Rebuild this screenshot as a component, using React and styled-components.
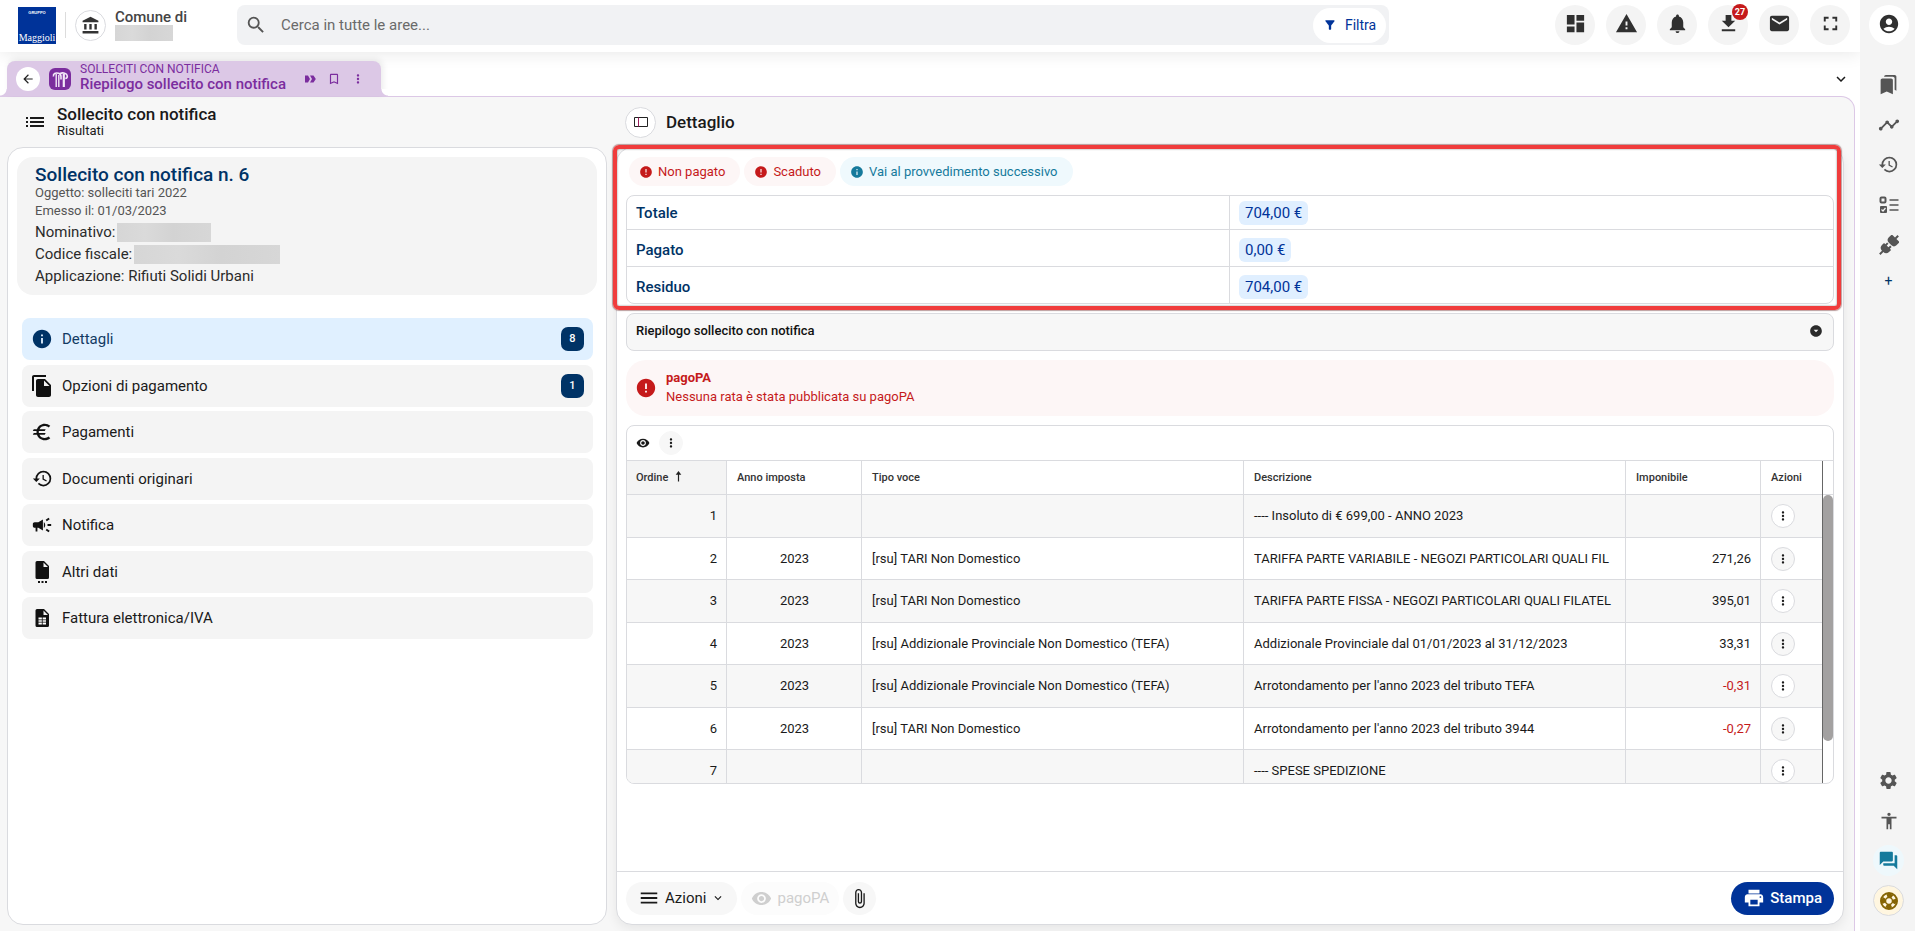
import React from "react";
import styled, { createGlobalStyle, css } from "styled-components";
import {
  MdAccessibility, MdAccountBalance, MdAccountCircle, MdArrowBack, MdAttachFile,
  MdBookmarkBorder, MdBookmarks, MdCampaign, MdDashboard, MdError, MdEuro, MdExpandMore,
  MdFileCopy, MdFileDownload, MdFilterAlt, MdForum, MdFullscreen, MdHistory, MdInfo, MdList,
  MdMail, MdMenu, MdMoreVert, MdNotifications, MdPrint, MdSearch, MdSettings, MdTimeline,
  MdVisibility, MdWarning, MdArrowDropDownCircle,
} from "react-icons/md";

const c = {
  navy: "#003366",
  blue: "#003399",
  purple: "#7b2d9e",
  lilac: "#dcc8e6",
  line: "#dadbdf",
  soft: "#f4f4f4",
  panel: "#f7f7f7",
  text: "#1a1a1a",
  red: "#c51a1b",
};

const Global = createGlobalStyle`
  *, *::before, *::after { box-sizing: border-box; }
  body { margin: 0; background: #fff; color: ${c.text}; font: 400 14px/20px Roboto, "Liberation Sans", sans-serif; }
  button, input { font: inherit; color: inherit; }
  button { border: 0; padding: 0; background: none; cursor: pointer; }
  h1, h2, p { margin: 0; }
  svg { display: block; flex: none; }
`;

const Shell = styled.div`
  display: grid;
  grid-template-columns: minmax(0, 1fr) 55px;
  min-height: 100vh;
`;
const Main = styled.div`
  display: flex;
  flex-direction: column;
`;

/* Header */
const Header = styled.header`
  display: flex;
  align-items: center;
  height: 52px;
  padding: 0 10px 2px 18px;
  background: #fff;
  box-shadow: 0 2px 16px rgba(0, 0, 0, 0.09);
`;
const Institution = styled.div`
  display: flex;
  align-items: center;
  gap: 9px;
  width: 219px;
`;
const Divider = styled.span`
  width: 1px;
  height: 26px;
  background: #dcdcdc;
`;
const InstitutionName = styled.div`
  font-size: 15px;
  font-weight: 500;
  line-height: 16px;
  color: #444;
`;
const Redacted = styled.span`
  display: block;
  width: ${(p) => p.$w}px;
  height: ${(p) => p.$h}px;
  background: linear-gradient(90deg, #d6d6d6, #dadada 30%, #d3d3d3 60%, #d7d7d7);
`;
const OutlineCircle = styled.button`
  display: grid;
  place-items: center;
  width: 31px;
  height: 31px;
  flex: none;
  border: 1px solid ${c.line};
  border-radius: 50%;
  background: #fff;
  color: #333;
`;
const Search = styled.form`
  display: flex;
  align-items: center;
  min-width: 0;
  flex: 0 1 1152px;
  height: 40px;
  padding: 0 3px 0 8px;
  border-radius: 8px;
  background: #f1f2f4;
  color: #555;
`;
const SearchInput = styled.input`
  flex: 1;
  min-width: 0;
  margin-left: 12px;
  border: 0;
  outline: 0;
  background: none;
  font-size: 15px;
  &::placeholder { color: #6a6a6a; opacity: 1; }
`;
const FilterButton = styled.button`
  display: flex;
  align-items: center;
  justify-content: center;
  gap: 8px;
  width: 73px;
  height: 35px;
  border-radius: 18px;
  background: #fff;
  color: ${c.blue};
`;
const HeaderActions = styled.nav`
  display: flex;
  gap: 11px;
  margin-left: auto;
`;
const RoundButton = styled.button`
  position: relative;
  display: grid;
  place-items: center;
  width: 40px;
  height: 40px;
  padding-bottom: 3px;
  border-radius: 50%;
  background: ${(p) => p.$bg || c.soft};
  color: #303030;
`;
const Count = styled.span`
  position: absolute;
  top: -1px;
  right: 0;
  width: 16px;
  height: 16px;
  border-radius: 50%;
  background: ${c.red};
  color: #fff;
  font-size: 9px;
  font-weight: 700;
  line-height: 16px;
  text-align: center;
`;

/* Tabs */
const TabBar = styled.div`
  display: flex;
  align-items: flex-end;
  justify-content: space-between;
  height: 44px;
  padding: 0 4px 0 7px;
`;
const Tab = styled.div`
  position: relative;
  display: flex;
  align-items: center;
  width: 374px;
  height: 35px;
  padding: 0 15px 0 9px;
  border-radius: 8px 8px 0 0;
  background: ${c.lilac};
  color: ${c.purple};
  box-shadow: 2px -2px 6px rgba(0, 0, 0, 0.08);
  &::before, &::after {
    content: "";
    position: absolute;
    bottom: 0;
    width: 7px;
    height: 7px;
  }
  &::before { right: 100%; background: radial-gradient(circle at 0 0, #fff 6px, ${c.lilac} 7px); }
  &::after { left: 100%; background: radial-gradient(circle at 100% 0, #fff 6px, ${c.lilac} 7px); }
`;
const BackButton = styled.button`
  display: grid;
  place-items: center;
  width: 24px;
  height: 24px;
  border-radius: 50%;
  background: #fff;
  color: #222;
`;
const TabLogo = styled.span`
  margin-left: 9px;
`;
const TabTitles = styled.div`
  flex: 1;
  margin-left: 9px;
  padding-bottom: 3px;
  white-space: nowrap;
`;
const TabOver = styled.div`
  font-size: 12px;
  line-height: 14px;
`;
const TabTitle = styled.div`
  font-size: 15px;
  font-weight: 500;
  line-height: 16px;
`;
const TabTools = styled.div`
  display: flex;
  gap: 8px;
`;
const ToolButton = styled.button`
  display: grid;
  place-items: center;
  width: 16px;
  height: 16px;
`;
const TabMenu = styled.button`
  display: grid;
  place-items: center;
  width: 30px;
  height: 35px;
`;

/* Work area */
const Workspace = styled.main`
  display: grid;
  grid-template-columns: minmax(0, 600fr) minmax(0, 1228fr);
  gap: 9px;
  flex: 1;
  margin-right: 5px;
  padding: 0 10px 6px 7px;
  border: solid ${c.lilac};
  border-width: 1px 1px 0 0;
  border-radius: 0 14px 0 0;
  background: ${c.panel};
`;
const Column = styled.section`
  position: relative;
  display: flex;
  flex-direction: column;
  min-width: 0;
`;
const ColumnHead = styled.div`
  display: flex;
  align-items: center;
  gap: 10px;
  height: 50px;
  padding-left: ${(p) => p.$indent}px;
`;
const Heading = styled.h1`
  font-size: 17px;
  font-weight: 500;
  line-height: 18px;
`;
const SubHeading = styled.p`
  font-size: 13px;
  line-height: 16px;
`;
const Card = styled.div`
  display: flex;
  flex-direction: column;
  flex: 1;
  padding: 9px 9px 0;
  border: 1px solid ${c.line};
  border-radius: 16px;
  background: #fff;
  ${(p) => p.$raised && css`box-shadow: 0 4px 12px rgba(0, 0, 0, 0.07);`}
`;

/* Record summary */
const Record = styled.div`
  height: 138px;
  padding: 7px 18px;
  border-radius: 16px;
  background: ${c.soft};
`;
const RecordTitle = styled.h2`
  font-size: 19px;
  font-weight: 500;
  line-height: 21px;
  color: ${c.navy};
`;
const RecordNote = styled.p`
  font-size: 13px;
  line-height: 20px;
  color: #555;
  &:first-of-type { line-height: 16px; }
`;
const RecordLine = styled.p`
  display: flex;
  align-items: center;
  gap: 2px;
  height: 22px;
  font-size: 15px;
  color: #2b2b2b;
`;

/* Section menu */
const Menu = styled.nav`
  display: flex;
  flex-direction: column;
  justify-content: space-between;
  height: 321px;
  margin: 23px 4px 0 5px;
`;
const MenuItem = styled.a`
  display: flex;
  align-items: center;
  gap: 8px;
  height: 42px;
  padding: 0 9px 0 8px;
  border-radius: 8px;
  background: ${(p) => (p.$active ? "#e0f0ff" : c.soft)};
  color: ${(p) => (p.$active ? "#123a63" : c.text)};
  font-size: 15px;
  text-decoration: none;
`;
const MenuIcon = styled.span`
  display: grid;
  place-items: center;
  width: 24px;
  color: ${(p) => (p.$active ? c.navy : "#111")};
`;
const MenuBadge = styled.span`
  width: 23px;
  height: 24px;
  margin-left: auto;
  border-radius: 7px;
  background: ${c.navy};
  color: #fff;
  font-size: 11px;
  font-weight: 500;
  line-height: 24px;
  text-align: center;
`;

/* Detail */
const Chips = styled.div`
  display: flex;
  gap: 4px;
  padding-left: 3px;
`;
const Chip = styled.span`
  display: flex;
  align-items: center;
  gap: 5px;
  height: 29px;
  padding: 0 15px 0 10px;
  border-radius: 15px;
  background: ${(p) => (p.$info ? "#eff9fd" : "#fdf6f6")};
  color: ${(p) => (p.$info ? "#157a9c" : c.red)};
  font-size: 13px;
  text-decoration: none;
`;
const Totals = styled.table`
  width: 100%;
  margin-top: 9px;
  border: 1px solid ${c.line};
  border-radius: 8px;
  border-spacing: 0;
  table-layout: fixed;
  font-size: 15px;
  th, td { height: 37px; padding: 3px 9px 0; text-align: left; }
  th { font-weight: 500; color: ${c.navy}; border-right: 1px solid ${c.line}; }
  tr:first-child > * { height: 33px; padding-top: 0; }
  tr + tr > * { border-top: 1px solid ${c.line}; }
`;
const Amount = styled.span`
  display: inline-block;
  height: 24px;
  padding: 0 6px;
  border-radius: 6px;
  background: #e0efff;
  color: ${c.blue};
  line-height: 24px;
  vertical-align: middle;
`;
const Accordion = styled.button`
  display: flex;
  align-items: center;
  justify-content: space-between;
  height: 38px;
  margin-top: 9px;
  padding: 0 10px 2px 9px;
  border: 1px solid ${c.line};
  border-radius: 8px;
  background: ${c.panel};
  font-size: 13px;
  font-weight: 500;
  color: #111;
  svg { color: #2b2b2b; }
`;
const Alert = styled.div`
  display: flex;
  align-items: center;
  gap: 9px;
  height: 56px;
  margin-top: 9px;
  padding-left: 9px;
  border-radius: 20px;
  background: #fdf6f6;
  color: ${c.red};
  font-size: 13px;
  line-height: 19px;
  strong { display: block; font-weight: 700; }
`;
const AlertText = styled.div`
  padding-bottom: 2px;
`;
const Grid = styled.div`
  height: 359px;
  margin-top: 9px;
  border: 1px solid ${c.line};
  border-radius: 8px;
  overflow: hidden;
`;
const GridTools = styled.div`
  display: flex;
  align-items: center;
  gap: 8px;
  height: 35px;
  padding-left: 8px;
  border-bottom: 1px solid ${c.line};
`;
const DotsButton = styled.button`
  display: grid;
  place-items: center;
  width: 24px;
  height: 24px;
  border: 1px solid ${(p) => (p.$plain ? c.panel : c.line)};
  border-radius: 50%;
  background: ${c.panel};
`;
const GridBody = styled.div`
  display: grid;
  grid-template-columns: minmax(0, 1fr) 10px;
  height: 322px;
`;
const GridView = styled.div`
  overflow: hidden;
  border-right: 1px solid #666;
`;
const DataTable = styled.table`
  width: 100%;
  table-layout: fixed;
  border-spacing: 0;
  font-size: 13px;
  th, td {
    padding: 0 9px 0 10px;
    border: solid ${c.line};
    border-width: 0 1px 1px 0;
    white-space: nowrap;
  }
  th:first-child, td:first-child { padding-left: 9px; }
  th:last-child, td:last-child { border-right: 0; }
  th { height: 34px; font-size: 11px; font-weight: 500; text-align: left; color: #333; }
  th:first-child { background: ${c.soft}; }
  th svg { display: inline-block; margin-left: 4px; vertical-align: -1px; }
  td { height: 42px; }
  tbody tr:nth-child(odd) td { height: 43px; background: ${c.panel}; }
  tbody tr:nth-child(odd) ${DotsButton} { background: #fff; }
`;
const Cell = styled.td`
  text-align: ${(p) => p.$align || "left"};
  color: ${(p) => (p.$negative ? c.red : c.text)};
`;
const ScrollTrack = styled.div`
  padding-top: 34px;
  background: linear-gradient(${c.line}, ${c.line}) 0 33px / 100% 1px no-repeat;
`;
const ScrollThumb = styled.div`
  height: 246px;
  border-radius: 5px;
  background: #a3a1a1;
`;
const Footer = styled.footer`
  display: flex;
  align-items: center;
  gap: 4px;
  height: 53px;
  margin: auto -9px 0;
  padding: 0 9px;
  border-top: 1px solid ${c.line};
`;
const PillButton = styled.button`
  display: flex;
  align-items: center;
  justify-content: center;
  gap: 5px;
  height: 33px;
  padding: 0 12px;
  border-radius: 17px;
  background: ${c.panel};
  font-size: 15px;
  ${(p) => p.$primary && css`
    margin-left: auto;
    background: ${c.blue};
    color: #fff;
    font-weight: 500;
  `}
  &:disabled { padding: 0 10px; background: #fcfcfc; color: #cfcfcf; }
`;
const RoundPill = styled(PillButton)`
  width: 33px;
  padding: 0;
`;

const Highlight = styled.div`
  position: absolute;
  top: 48px;
  left: -3px;
  right: 3px;
  height: 165px;
  border: 4px solid #f03c3c;
  border-radius: 6px;
  box-shadow: 0 0 1px 1px rgba(120, 60, 60, 0.5), inset 0 0 2px rgba(0, 0, 0, 0.5);
  pointer-events: none;
`;

/* Right rail */
const Rail = styled.aside`
  display: flex;
  flex-direction: column;
  align-items: center;
  padding: 5px 0 15px 2px;
  background: ${c.soft};
`;
const RailGroup = styled.div`
  display: flex;
  flex-direction: column;
  gap: 9px;
  margin-top: ${(p) => p.$top};
`;
const RailButton = styled.button`
  display: grid;
  place-items: center;
  width: 31px;
  height: ${(p) => (p.$short ? 24 : 31)}px;
  border: 1px solid ${(p) => p.$border || "transparent"};
  border-radius: 50%;
  background: ${(p) => p.$bg || "transparent"};
  color: ${(p) => p.$color || "#555"};
`;

const Logo = () => (
  <svg width="38" height="37" viewBox="0 0 38 37" role="img" aria-label="Gruppo Maggioli">
    <rect width="38" height="37" fill={c.blue} />
    <text x="19" y="7" fill="#fff" fontFamily="Liberation Sans, sans-serif" fontSize="4" fontWeight="700" textAnchor="middle">GRUPPO</text>
    <text x="19" y="34" fill="#fff" fontFamily="Liberation Serif, serif" fontSize="10" textAnchor="middle">Maggioli</text>
  </svg>
);
const TributiIcon = () => (
  <svg width="22" height="22" viewBox="0 0 22 22">
    <rect width="22" height="22" rx="6" fill={c.purple} />
    <g fill="none" stroke="#f3e8f8">
      <path d="M4.500 8.500c-.6-3 2-4 5-3.200 2 .6 2.500 1.500 2.500 3.200v3" strokeWidth="1.600" />
      <path d="M7.200 6v13M9.800 7v12" strokeWidth="1.400" />
      <path d="M11 5.500c3-1.200 7-.5 7.300 2.500.1 1.500-.8 2.300-2 2.500" strokeWidth="1.600" />
      <path d="M14.800 6v13" strokeWidth="2.200" />
    </g>
  </svg>
);
const FastIcon = () => (
  <svg width="12" height="10" viewBox="0 0 12 10" fill="currentColor">
    <path d="M1 1.500h3l2 3.500-2 3.500H1zM6 1.500h3.500L11.800 5 9.500 8.500H6L8 5z" />
  </svg>
);
const SortIcon = () => (
  <svg width="7" height="11" viewBox="0 0 7 11">
    <path d="M3.500 2v8.500" stroke="#222" strokeWidth="1.200" />
    <path d="M3.500 0L6.300 3.800H.7z" fill="#222" />
  </svg>
);
const PaneIcon = () => (
  <svg width="14" height="12" viewBox="0 0 14 12" fill="none" stroke="#222">
    <path d="M.5 1.500h13v9H.5z" />
    <path d="M4.500 1.500v9" stroke="#9b1c5a" />
  </svg>
);
const DataFileIcon = () => (
  <svg width="19" height="22" viewBox="0 0 19 22" fill="currentColor">
    <path d="M4 0h7l5 5v11.500a1.500 1.500 0 0 1-1.500 1.500h-10.500A1.500 1.500 0 0 1 2.500 16.500v-15A1.500 1.500 0 0 1 4 0zm6.500 1.500V6H15zM5 20h2v2H5zM8.500 20h2v2h-2zM12 20h2v2h-2z" fillRule="evenodd" />
  </svg>
);
const InvoiceIcon = () => (
  <svg width="19" height="20" viewBox="0 0 19 20">
    <path d="M4 1h7l5 5v11.500a1.500 1.500 0 0 1-1.500 1.500h-10.500A1.500 1.500 0 0 1 2.500 17.500v-15A1.500 1.500 0 0 1 4 1zm6.500 1.500V7H15z" fill="currentColor" fillRule="evenodd" />
    <path d="M5.500 9.500h7.500v7H5.500z" fill="#fff" />
    <path d="M5 11.800h8M5 14.200h8M9.300 9v8" stroke="#111" strokeWidth=".8" />
  </svg>
);
const ChecklistIcon = () => (
  <svg width="20" height="18" viewBox="0 0 20 18" fill="none" stroke="currentColor" strokeWidth="2">
    <rect x="1.500" y="1.500" width="5" height="5" rx="1" />
    <rect x="1" y="10" width="7" height="7" rx="1" fill="currentColor" stroke="none" />
    <path d="M2.500 13.500l1.500 1.500 2.500-3" stroke="#f4f4f4" strokeWidth="1.200" />
    <path d="M10.500 4h9M10.500 9h9M10.500 14h9" strokeWidth="1.600" />
  </svg>
);
const PlugsIcon = () => (
  <svg width="20" height="20" viewBox="0 0 20 20">
    <g transform="rotate(45 10 10)" fill="currentColor">
      <path d="M9-3h2v3.500h4.500V5c0 2-1.300 3.500-3.500 3.500H8C5.800 8.500 4.500 7 4.500 5V.5H9z" />
      <path d="M5 12h1.800V9.500h2V12h2.400V9.500h2V12H15v3c0 2.500-1.600 4-4 4v4H9v-4c-2.400 0-4-1.500-4-4z" />
    </g>
  </svg>
);
const LifebuoyIcon = () => (
  <svg width="20" height="20" viewBox="0 0 20 20" fill="none" stroke="currentColor">
    <circle cx="10" cy="10" r="8" strokeWidth="2" />
    <circle cx="10" cy="10" r="5.500" strokeWidth="3.500" strokeDasharray="5.500 3.140" strokeDashoffset="2.750" />
    <circle cx="10" cy="10" r="3.500" strokeWidth="1.500" />
  </svg>
);

const headerActions = [
  ["Cruscotto", MdDashboard],
  ["Avvisi", MdWarning],
  ["Notifiche", MdNotifications],
  ["Download", MdFileDownload, 27],
  ["Posta", MdMail],
  ["Schermo intero", MdFullscreen],
];
const menu = [
  ["Dettagli", <MdInfo size={22} />, 8],
  ["Opzioni di pagamento", <MdFileCopy size={24} />, 1],
  ["Pagamenti", <MdEuro size={22} />],
  ["Documenti originari", <MdHistory size={21} />],
  ["Notifica", <MdCampaign size={22} />],
  ["Altri dati", <DataFileIcon />],
  ["Fattura elettronica/IVA", <InvoiceIcon />],
];
const totals = [
  ["Totale", "704,00 €"],
  ["Pagato", "0,00 €"],
  ["Residuo", "704,00 €"],
];
const rows = [
  [1, "", "", "---- Insoluto di € 699,00 - ANNO 2023", ""],
  [2, "2023", "[rsu] TARI Non Domestico", "TARIFFA PARTE VARIABILE - NEGOZI PARTICOLARI QUALI FIL", "271,26"],
  [3, "2023", "[rsu] TARI Non Domestico", "TARIFFA PARTE FISSA - NEGOZI PARTICOLARI QUALI FILATEL", "395,01"],
  [4, "2023", "[rsu] Addizionale Provinciale Non Domestico (TEFA)", "Addizionale Provinciale dal 01/01/2023 al 31/12/2023", "33,31"],
  [5, "2023", "[rsu] Addizionale Provinciale Non Domestico (TEFA)", "Arrotondamento per l'anno 2023 del tributo TEFA", "-0,31"],
  [6, "2023", "[rsu] TARI Non Domestico", "Arrotondamento per l'anno 2023 del tributo 3944", "-0,27"],
  [7, "", "", "---- SPESE SPEDIZIONE", ""],
];

function TopBar() {
  return (
    <Header>
      <Institution>
        <Logo />
        <Divider />
        <OutlineCircle aria-label="Ente"><MdAccountBalance size={19} /></OutlineCircle>
        <InstitutionName>
          <div>Comune di</div>
          <Redacted $w={58} $h={16} />
        </InstitutionName>
      </Institution>
      <Search onSubmit={(e) => e.preventDefault()}>
        <MdSearch size={22} />
        <SearchInput aria-label="Cerca" placeholder="Cerca in tutte le aree..." />
        <FilterButton type="button"><MdFilterAlt size={14} />Filtra</FilterButton>
      </Search>
      <HeaderActions>
        {headerActions.map(([label, Icon, count]) => (
          <RoundButton key={label} aria-label={label}>
            <Icon size={23} />
            {count && <Count>{count}</Count>}
          </RoundButton>
        ))}
      </HeaderActions>
    </Header>
  );
}

function RecordPanel() {
  return (
    <Column>
      <ColumnHead $indent={16}>
        <MdList size={24} />
        <div>
          <Heading>Sollecito con notifica</Heading>
          <SubHeading>Risultati</SubHeading>
        </div>
      </ColumnHead>
      <Card>
        <Record>
          <RecordTitle>Sollecito con notifica n. 6</RecordTitle>
          <RecordNote>Oggetto: solleciti tari 2022</RecordNote>
          <RecordNote>Emesso il: 01/03/2023</RecordNote>
          <RecordLine>Nominativo: <Redacted $w={94} $h={19} /></RecordLine>
          <RecordLine>Codice fiscale: <Redacted $w={146} $h={19} /></RecordLine>
          <RecordLine>Applicazione: Rifiuti Solidi Urbani</RecordLine>
        </Record>
        <Menu>
          {menu.map(([label, icon, count], i) => (
            <MenuItem key={label} href="#" $active={i === 0}>
              <MenuIcon $active={i === 0}>{icon}</MenuIcon>
              {label}
              {count && <MenuBadge>{count}</MenuBadge>}
            </MenuItem>
          ))}
        </Menu>
      </Card>
    </Column>
  );
}

function EntriesGrid() {
  return (
    <Grid>
      <GridTools>
        <ToolButton aria-label="Visualizza"><MdVisibility size={14} /></ToolButton>
        <DotsButton $plain aria-label="Altre opzioni"><MdMoreVert size={14} /></DotsButton>
      </GridTools>
      <GridBody>
        <GridView>
          <DataTable>
            <colgroup>
              <col width="100" />
              <col width="135" />
              <col />
              <col />
              <col width="135" />
              <col width="61" />
            </colgroup>
            <thead>
              <tr>
                <th>Ordine <SortIcon /></th>
                <th>Anno imposta</th>
                <th>Tipo voce</th>
                <th>Descrizione</th>
                <th>Imponibile</th>
                <th>Azioni</th>
              </tr>
            </thead>
            <tbody>
              {rows.map(([n, year, type, text, amount]) => (
                <tr key={n}>
                  <Cell $align="right">{n}</Cell>
                  <Cell $align="center">{year}</Cell>
                  <Cell>{type}</Cell>
                  <Cell>{text}</Cell>
                  <Cell $align="right" $negative={amount.startsWith("-")}>{amount}</Cell>
                  <Cell><DotsButton aria-label={`Azioni riga ${n}`}><MdMoreVert size={14} /></DotsButton></Cell>
                </tr>
              ))}
            </tbody>
          </DataTable>
        </GridView>
        <ScrollTrack><ScrollThumb /></ScrollTrack>
      </GridBody>
    </Grid>
  );
}

function DetailPanel() {
  return (
    <Column>
      <ColumnHead $indent={9}>
        <OutlineCircle aria-label="Mostra o nascondi elenco"><PaneIcon /></OutlineCircle>
        <Heading>Dettaglio</Heading>
      </ColumnHead>
      <Card $raised>
        <Chips>
          <Chip><MdError size={14} />Non pagato</Chip>
          <Chip><MdError size={14} />Scaduto</Chip>
          <Chip as="a" href="#" $info><MdInfo size={14} />Vai al provvedimento successivo</Chip>
        </Chips>
        <Totals>
          <tbody>
            {totals.map(([label, value]) => (
              <tr key={label}>
                <th scope="row">{label}</th>
                <td><Amount>{value}</Amount></td>
              </tr>
            ))}
          </tbody>
        </Totals>
        <Accordion>Riepilogo sollecito con notifica<MdArrowDropDownCircle size={14} /></Accordion>
        <Alert>
          <MdError size={22} />
          <AlertText><strong>pagoPA</strong>Nessuna rata è stata pubblicata su pagoPA</AlertText>
        </Alert>
        <EntriesGrid />
        <Footer>
          <PillButton><MdMenu size={22} />Azioni<MdExpandMore size={14} /></PillButton>
          <PillButton disabled><MdVisibility size={21} />pagoPA</PillButton>
          <RoundPill aria-label="Allegati"><MdAttachFile size={21} /></RoundPill>
          <PillButton $primary><MdPrint size={22} />Stampa</PillButton>
        </Footer>
      </Card>
      <Highlight />
    </Column>
  );
}

export default function App() {
  return (
    <Shell>
      <Global />
      <Main>
        <TopBar />
        <TabBar>
          <Tab>
            <BackButton aria-label="Indietro"><MdArrowBack size={14} /></BackButton>
            <TabLogo><TributiIcon /></TabLogo>
            <TabTitles>
              <TabOver>SOLLECITI CON NOTIFICA</TabOver>
              <TabTitle>Riepilogo sollecito con notifica</TabTitle>
            </TabTitles>
            <TabTools>
              <ToolButton aria-label="Avanza"><FastIcon /></ToolButton>
              <ToolButton aria-label="Segnalibro"><MdBookmarkBorder size={14} /></ToolButton>
              <ToolButton aria-label="Altro"><MdMoreVert size={14} /></ToolButton>
            </TabTools>
          </Tab>
          <TabMenu aria-label="Elenco schede"><MdExpandMore size={18} /></TabMenu>
        </TabBar>
        <Workspace>
          <RecordPanel />
          <DetailPanel />
        </Workspace>
      </Main>
      <Rail>
        <RoundButton aria-label="Profilo" $bg="#fff"><MdAccountCircle size={22} /></RoundButton>
        <RailGroup $top="24px">
          <RailButton aria-label="Segnalibri"><MdBookmarks size={21} /></RailButton>
          <RailButton aria-label="Andamento"><MdTimeline size={22} /></RailButton>
          <RailButton aria-label="Cronologia"><MdHistory size={21} /></RailButton>
          <RailButton aria-label="Attività"><ChecklistIcon /></RailButton>
          <RailButton aria-label="Connessioni"><PlugsIcon /></RailButton>
          <RailButton aria-label="Aggiungi" $short $color={c.navy}>+</RailButton>
        </RailGroup>
        <RailGroup $top="auto">
          <RailButton aria-label="Impostazioni"><MdSettings size={21} /></RailButton>
          <RailButton aria-label="Accessibilità"><MdAccessibility size={20} /></RailButton>
          <RailButton aria-label="Chat" $bg="#eef8fc" $color="#157a9c"><MdForum size={21} /></RailButton>
          <RailButton aria-label="Supporto" $bg="#fff6e0" $border={c.line} $color="#856404"><LifebuoyIcon /></RailButton>
        </RailGroup>
      </Rail>
    </Shell>
  );
}
